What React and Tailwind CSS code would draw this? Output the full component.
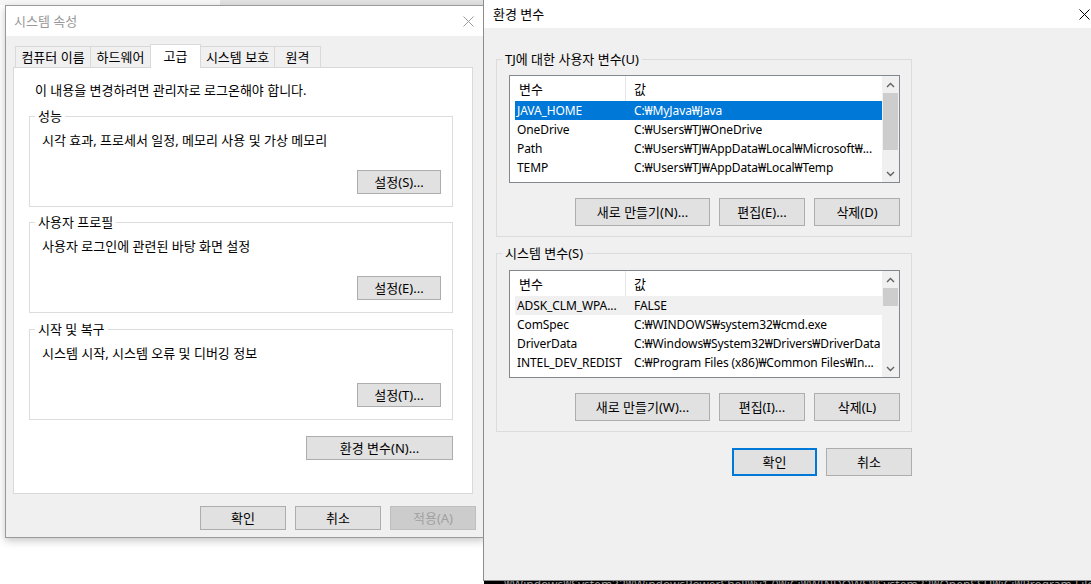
import React from 'react';

const FONT = "font-['Noto_Sans','Noto_Sans_CJK_KR',sans-serif]";

function Btn({ children, className = '', disabled = false, primary = false }) {
  let look = 'border border-[#adadad] bg-[#e1e1e1] text-black';
  if (disabled) look = 'border border-[#bfbfbf] bg-[#cccccc] text-[#a0a0a0]';
  if (primary) look = 'border-2 border-[#0078d7] bg-[#e1e1e1] text-black';
  return (
    <div className={`flex items-center justify-center shrink-0 text-[13px] leading-[16px] ${look} ${className}`}>
      {children}
    </div>
  );
}

function Group({ label, className = '', children }) {
  return (
    <fieldset className={`border border-[#dcdcdc] ${className}`}>
      <legend className="ml-[5px] px-[3px] text-[13px] leading-[16px]">{label}</legend>
      {children}
    </fieldset>
  );
}

function Chevron({ up }) {
  return (
    <svg width="9" height="6" viewBox="0 0 9 6">
      <path
        d={up ? 'M1 5 L4.5 1.5 L8 5' : 'M1 1 L4.5 4.5 L8 1'}
        fill="none"
        stroke="#606060"
        strokeWidth="1.4"
      />
    </svg>
  );
}

function Scrollbar({ thumbH }) {
  return (
    <div className="w-[17px] h-full bg-[#f0f0f0] flex flex-col shrink-0">
      <div className="h-[17px] flex items-center justify-center shrink-0">
        <Chevron up />
      </div>
      <div className="flex-1">
        <div className="ml-[1px] w-[15px] bg-[#cdcdcd]" style={{ height: thumbH }} />
      </div>
      <div className="h-[17px] flex items-center justify-center shrink-0">
        <Chevron />
      </div>
    </div>
  );
}

function VarList({ rows, thumbH, className = '' }) {
  return (
    <div className={`ml-[12px] w-[391px] h-[108px] border border-[#828790] bg-white flex overflow-hidden ${className}`}>
      <div className="flex-1 flex flex-col overflow-hidden">
        <div className="h-[25px] flex items-center shrink-0">
          <div className="w-[116px] h-full border-r border-[#e5e5e5] pl-[9px] flex items-center">변수</div>
          <div className="pl-[8px]">값</div>
        </div>
        {rows.map((r) => (
          <div
            key={r.name}
            className={`ml-[5px] h-[19px] flex items-center shrink-0 text-[12px] tracking-[-0.1px] ${
              r.sel ? 'bg-[#0078d7] text-white' : r.hover ? 'bg-[#f0f0f0]' : ''
            }`}
          >
            <div className="w-[119px] pl-[2px] whitespace-nowrap overflow-hidden">{r.name}</div>
            <div className="flex-1 whitespace-nowrap overflow-hidden">{r.value}</div>
          </div>
        ))}
      </div>
      <Scrollbar thumbH={thumbH} />
    </div>
  );
}

const userVars = [
  { name: 'JAVA_HOME', value: 'C:₩MyJava₩Java', sel: true },
  { name: 'OneDrive', value: 'C:₩Users₩TJ₩OneDrive' },
  { name: 'Path', value: 'C:₩Users₩TJ₩AppData₩Local₩Microsoft₩...' },
  { name: 'TEMP', value: 'C:₩Users₩TJ₩AppData₩Local₩Temp' },
];

const sysVars = [
  { name: 'ADSK_CLM_WPA...', value: 'FALSE', hover: true },
  { name: 'ComSpec', value: 'C:₩WINDOWS₩system32₩cmd.exe' },
  { name: 'DriverData', value: 'C:₩Windows₩System32₩Drivers₩DriverData' },
  { name: 'INTEL_DEV_REDIST', value: 'C:₩Program Files (x86)₩Common Files₩In...' },
];

const tabs = [
  { label: '컴퓨터 이름', w: 'w-[76px]' },
  { label: '하드웨어', w: 'w-[61px]' },
  { label: '고급', w: 'w-[51px]', active: true },
  { label: '시스템 보호', w: 'w-[75px]' },
  { label: '원격', w: 'w-[47px]' },
];

function SystemProperties() {
  return (
    <div className="absolute left-[5px] top-[5px] w-[480px] h-[533px] border border-[#9a9a9a] bg-[#f0f0f0] shadow-[0_3px_8px_rgba(0,0,0,0.22)] flex flex-col">
      <div className="h-[30px] bg-white flex items-center justify-between pl-[8px] pr-[10px] shrink-0">
        <span className="text-[13px] leading-[16px] text-[#999999]">시스템 속성</span>
        <svg width="11" height="11" viewBox="0 0 11 11">
          <path d="M0.5 0.5 L10.5 10.5 M10.5 0.5 L0.5 10.5" stroke="#9a9a9a" strokeWidth="1" />
        </svg>
      </div>
      <div className="flex-1 px-[7px] pt-[8px]">
        <div className="relative z-10 h-[24px] -mb-px flex pl-[2px]">
          {tabs.map((t) =>
            t.active ? (
              <div
                key={t.label}
                className={`${t.w} h-[24px] -ml-px bg-white border border-b-0 border-[#d9d9d9] flex items-center justify-center pb-[2px]`}
              >
                {t.label}
              </div>
            ) : (
              <div
                key={t.label}
                className={`${t.w} h-[21px] mt-[2px] -ml-px first:ml-0 bg-[#f0f0f0] border border-b-0 border-[#d9d9d9] flex items-center justify-center`}
              >
                {t.label}
              </div>
            )
          )}
        </div>
        <div className="w-[460px] h-[427px] bg-white border border-[#d9d9d9] pt-[14px]">
          <p className="pl-[21px]">이 내용을 변경하려면 관리자로 로그온해야 합니다.</p>

          <Group label="성능" className="w-[424px] ml-[15px] mt-[10px]">
            <p className="mt-[8px] pl-[12px]">시각 효과, 프로세서 일정, 메모리 사용 및 가상 메모리</p>
            <div className="mt-[22px] flex justify-end pr-[11px] pb-[12px]">
              <Btn className="w-[84px] h-[24px]">설정(S)...</Btn>
            </div>
          </Group>

          <Group label="사용자 프로필" className="w-[424px] ml-[15px] mt-[7px]">
            <p className="mt-[8px] pl-[12px]">사용자 로그인에 관련된 바탕 화면 설정</p>
            <div className="mt-[22px] flex justify-end pr-[11px] pb-[12px]">
              <Btn className="w-[84px] h-[24px]">설정(E)...</Btn>
            </div>
          </Group>

          <Group label="시작 및 복구" className="w-[424px] ml-[15px] mt-[8px]">
            <p className="mt-[8px] pl-[12px]">시스템 시작, 시스템 오류 및 디버깅 정보</p>
            <div className="mt-[22px] flex justify-end pr-[11px] pb-[12px]">
              <Btn className="w-[84px] h-[24px]">설정(T)...</Btn>
            </div>
          </Group>

          <div className="w-[439px] mt-[16px] flex justify-end">
            <Btn className="w-[147px] h-[24px]">환경 변수(N)...</Btn>
          </div>
        </div>

        <div className="mt-[12px] flex justify-end gap-[9px] pr-[1px]">
          <Btn className="w-[86px] h-[24px]">확인</Btn>
          <Btn className="w-[86px] h-[24px]">취소</Btn>
          <Btn className="w-[86px] h-[24px]" disabled>
            적용(A)
          </Btn>
        </div>
      </div>
    </div>
  );
}

function EnvVariables() {
  return (
    <div className="absolute left-[483px] top-[-1px] w-[620px] h-[582px] border border-[#8c8c8c] bg-[#f0f0f0] flex flex-col">
      <div className="h-[28px] bg-white flex items-center justify-between pl-[9px] pr-[12px] shrink-0">
        <span className="text-[13px] leading-[16px] text-black">환경 변수</span>
        <svg width="11" height="11" viewBox="0 0 11 11">
          <path d="M0.5 0.5 L10.5 10.5 M10.5 0.5 L0.5 10.5" stroke="#000" strokeWidth="1" />
        </svg>
      </div>
      <div className="flex-1 pl-[12px] pt-[23px]">
        <Group label="TJ에 대한 사용자 변수(U)" className="w-[416px]">
          <VarList rows={userVars} thumbH={57} className="mt-[8px]" />
          <div className="mt-[15px] mr-[11px] mb-[10px] flex justify-end gap-[9px]">
            <Btn className="w-[135px] h-[28px]">새로 만들기(N)...</Btn>
            <Btn className="w-[86px] h-[28px]">편집(E)...</Btn>
            <Btn className="w-[86px] h-[28px]">삭제(D)</Btn>
          </div>
        </Group>

        <Group label="시스템 변수(S)" className="w-[416px] mt-[8px]">
          <VarList rows={sysVars} thumbH={18} className="mt-[9px]" />
          <div className="mt-[15px] mr-[11px] mb-[10px] flex justify-end gap-[9px]">
            <Btn className="w-[135px] h-[28px]">새로 만들기(W)...</Btn>
            <Btn className="w-[86px] h-[28px]">편집(I)...</Btn>
            <Btn className="w-[86px] h-[28px]">삭제(L)</Btn>
          </div>
        </Group>

        <div className="w-[416px] mt-[16px] flex justify-end gap-[9px]">
          <Btn className="w-[85px] h-[28px]" primary>
            확인
          </Btn>
          <Btn className="w-[86px] h-[28px]">취소</Btn>
        </div>
      </div>
    </div>
  );
}

export default function App() {
  return (
    <div className={`relative w-[1091px] h-[584px] overflow-hidden bg-white text-[13px] leading-[16px] text-black ${FONT}`}>
      {/* desktop behind the dialogs */}
      <div className="absolute left-0 top-0 h-[5px] w-[483px] flex">
        <div className="w-[220px] bg-[#f7f7f7]" />
        <div className="flex-1 bg-[#e2e2e2]" />
      </div>
      <div className="absolute left-[484px] top-[581px] w-[607px] h-[3px] bg-black overflow-hidden">
        <div className="pl-[20px] text-[12px] leading-[12px] text-[#9a9a9a] whitespace-nowrap mt-[-2px]">
          ₩Windows₩System32₩WindowsPowerShell₩v1.0₩;C:₩WINDOWS₩System32₩OpenSSH₩;C:₩Program Files₩
        </div>
      </div>

      <SystemProperties />
      <EnvVariables />
    </div>
  );
}
